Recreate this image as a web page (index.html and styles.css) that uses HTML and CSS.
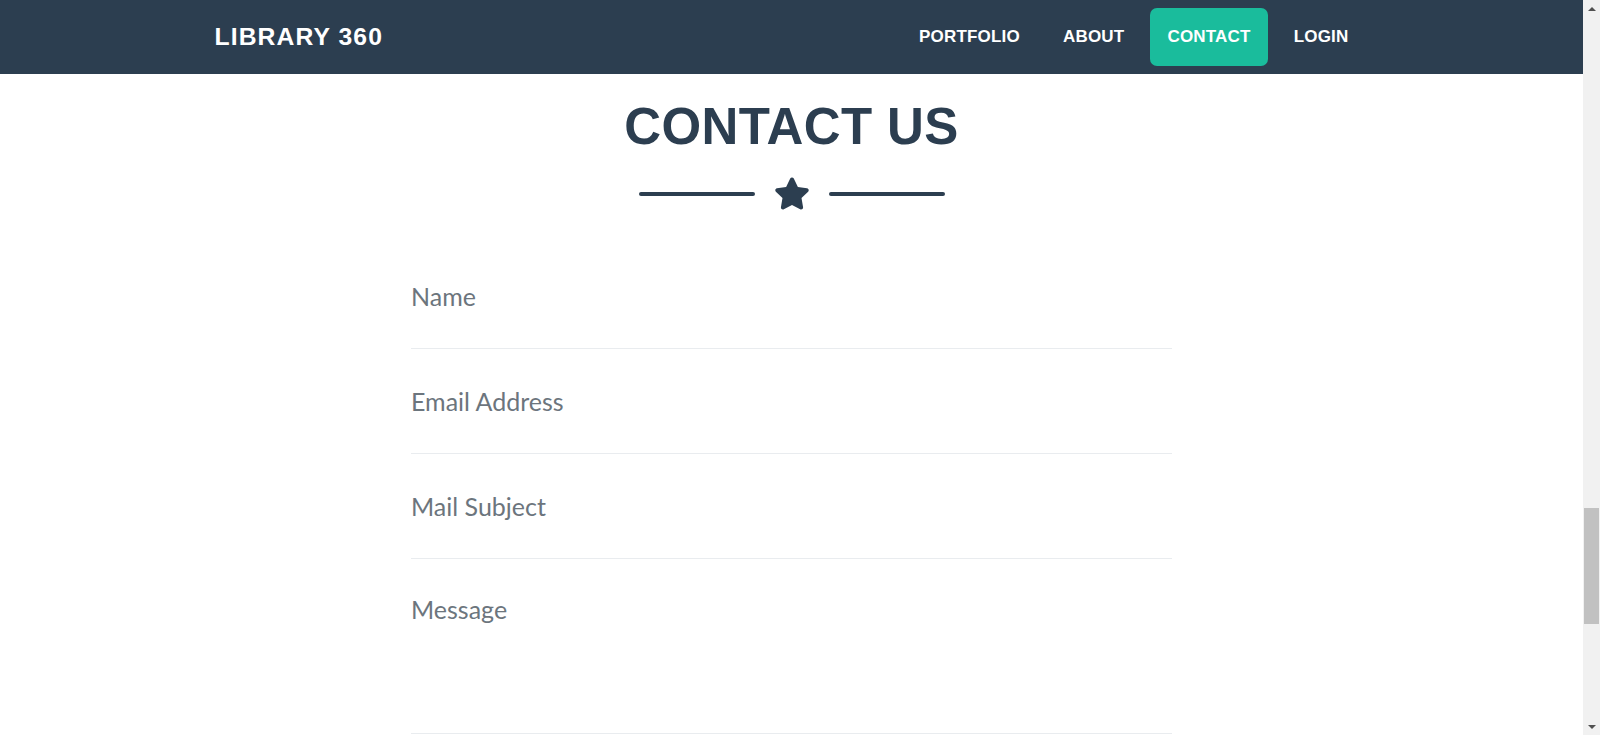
FILE: index.html
```html
<!DOCTYPE html>
<html lang="en">
<head>
<meta charset="utf-8">
<title>Library 360 - Contact</title>
<link rel="stylesheet" href="styles.css">
</head>
<body>
<div class="page">
  <nav class="navbar">
    <div class="nav-container">
      <a class="brand" href="#">LIBRARY 360</a>
      <ul class="nav-links">
        <li><a class="nav-link" href="#">PORTFOLIO</a></li>
        <li><a class="nav-link" href="#">ABOUT</a></li>
        <li><a class="nav-link active" href="#">CONTACT</a></li>
        <li><a class="nav-link" href="#">LOGIN</a></li>
      </ul>
    </div>
  </nav>
  <section class="contact">
    <h2 class="title">CONTACT US</h2>
    <div class="divider">
      <span class="divider-line"></span>
      <svg class="divider-star" viewBox="0 0 576 512" aria-hidden="true"><path d="M259.3 17.8L194 150.2 47.9 171.5c-26.2 3.8-36.7 36.1-17.7 54.6l105.7 103-25 145.5c-4.5 26.3 23.2 46 46.4 33.7L288 439.6l130.7 68.7c23.2 12.2 50.9-7.4 46.4-33.7l-25-145.5 105.7-103c19-18.5 8.5-50.8-17.7-54.6L382 150.2 316.7 17.8c-11.7-23.6-45.6-23.9-57.4 0z"/></svg>
      <span class="divider-line"></span>
    </div>
    <form class="contact-form">
      <div class="form-group">
        <input class="field" type="text" placeholder="Name" aria-label="Name">
      </div>
      <div class="form-group">
        <input class="field" type="email" placeholder="Email Address" aria-label="Email Address">
      </div>
      <div class="form-group">
        <input class="field" type="text" placeholder="Mail Subject" aria-label="Mail Subject">
      </div>
      <div class="form-group message-group">
        <textarea class="field message" rows="3" placeholder="Message" aria-label="Message"></textarea>
      </div>
    </form>
  </section>
</div>
<div class="scrollbar" aria-hidden="true">
  <div class="sb-button"><span class="sb-arrow-up"></span></div>
  <div class="sb-track"><div class="sb-thumb"></div></div>
  <div class="sb-button"><span class="sb-arrow-down"></span></div>
</div>
</body>
</html>
```
FILE: styles.css
```css
body {
  margin: 0;
  height: 100vh;
  display: flex;
  overflow: hidden;
  background: #ffffff;
  font-family: "Lato", "Liberation Sans", sans-serif;
  color: #2c3e50;
}
.page {
  flex: 1;
  min-width: 0;
  overflow: hidden;
}
.scrollbar {
  width: 17px;
  flex: 0 0 17px;
  background: #f1f1f1;
  display: flex;
  flex-direction: column;
}
.sb-button {
  height: 17px;
  display: flex;
  align-items: center;
  justify-content: center;
}
.sb-arrow-up {
  width: 0;
  height: 0;
  border-left: 4px solid transparent;
  border-right: 4px solid transparent;
  border-bottom: 4px solid #505050;
}
.sb-arrow-down {
  width: 0;
  height: 0;
  border-left: 4px solid transparent;
  border-right: 4px solid transparent;
  border-top: 4px solid #505050;
}
.sb-track {
  flex: 1;
  padding: 0 1px;
}
.sb-thumb {
  margin-top: 491px;
  height: 116px;
  background: #c1c1c1;
}
.navbar {
  background: #2c3e50;
  height: 74px;
}
.nav-container {
  max-width: 1154px;
  margin: 0 auto;
  height: 100%;
  display: flex;
  align-items: center;
  justify-content: space-between;
}
.brand {
  font-family: "Liberation Sans", Arial, sans-serif;
  font-weight: 700;
  font-size: 24.7px;
  letter-spacing: 1.1px;
  color: #ffffff;
  text-decoration: none;
}
.nav-links {
  list-style: none;
  margin: 0 3px 0 0;
  padding: 0;
  display: flex;
  align-items: center;
  gap: 9px;
}
.nav-link {
  display: block;
  font-family: "Liberation Sans", Arial, sans-serif;
  font-weight: 700;
  font-size: 17px;
  letter-spacing: 0.2px;
  color: #ffffff;
  text-decoration: none;
  padding: 0 17px;
  height: 58px;
  line-height: 58px;
  border-radius: 7px;
}
.nav-link.active {
  background: #1abc9c;
}
.contact {
  padding-top: 22px;
}
.title {
  margin: 0;
  text-align: center;
  font-family: "Liberation Sans", Arial, sans-serif;
  font-weight: 700;
  font-size: 51px;
  line-height: 1.2;
  letter-spacing: 0.4px;
  color: #2c3e50;
}
.divider {
  margin-top: 20px;
  display: flex;
  align-items: center;
  justify-content: center;
  gap: 19px;
}
.divider-line {
  width: 116px;
  height: 4px;
  border-radius: 2px;
  background: #2c3e50;
}
.divider-star {
  width: 36px;
  height: 33px;
  fill: #2c3e50;
}
.contact-form {
  width: 761px;
  margin: 34px auto 0;
}
.form-group {
  padding: 34px 0;
  border-bottom: 1px solid #e9ecef;
}
.message-group {
  padding: 32px 0 34px;
}
.field {
  display: block;
  width: 100%;
  box-sizing: border-box;
  border: none;
  outline: none;
  background: none;
  padding: 0;
  margin: 0;
  font-family: "Lato", "Liberation Sans", sans-serif;
  font-size: 25px;
  line-height: 36px;
  height: 36px;
  color: #2c3e50;
}
.field::placeholder {
  color: #6c757d;
  opacity: 1;
}
.message {
  height: 108px;
  resize: none;
}
```
